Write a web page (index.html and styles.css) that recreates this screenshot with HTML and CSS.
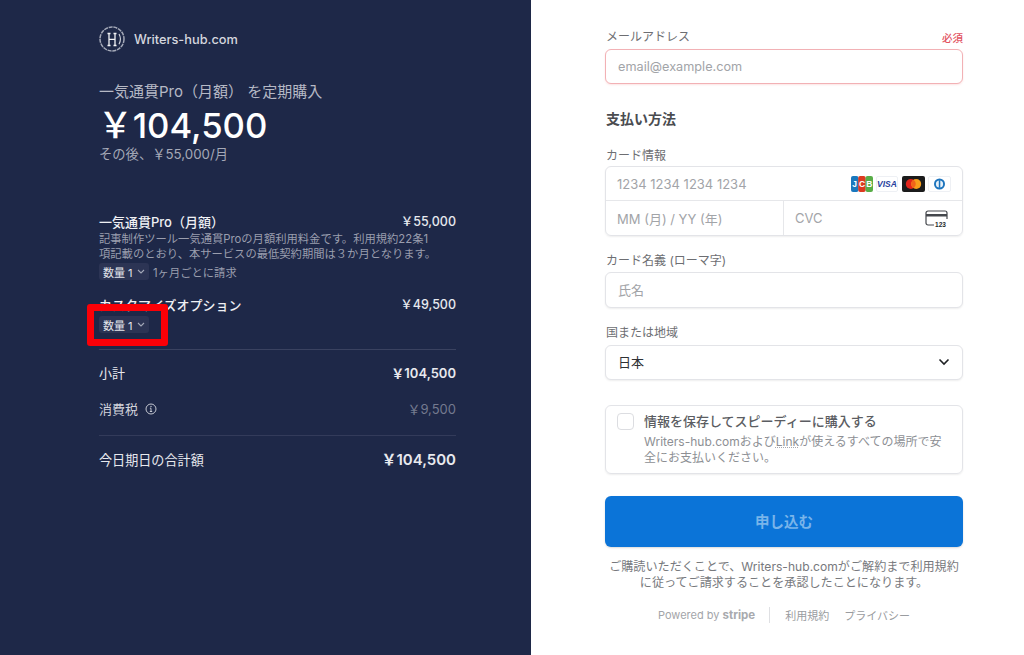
FILE: index.html
```html
<!DOCTYPE html>
<html lang="ja">
<head>
<meta charset="utf-8">
<title>Writers-hub.com</title>
<link rel="stylesheet" href="styles.css">
</head>
<body>
<div class="page">
  <aside class="summary">
    <div class="brand">
      <svg class="logo" viewBox="0 0 26 26" width="26" height="26">
        <circle cx="13" cy="13" r="12" fill="none" stroke="#a4a9b8" stroke-width="1.500" stroke-dasharray="4 0.8"/>
        <path d="M10 7.500v12M16 7.500v12M10 13.300h6M8.500 7.500h3M8.500 19.500h3M14.500 7.500h3M14.500 19.500h3" fill="none" stroke="#f2f3f6" stroke-width="1.300"/>
        <path d="M20 8c1.800 3.200 1.800 7 0 10.200" fill="none" stroke="#d5d8e0" stroke-width="1.100"/>
      </svg>
      <span class="brand-name">Writers-hub.com</span>
    </div>
    <div class="plan">一気通貫Pro（月額） を定期購入</div>
    <div class="price">￥104,500</div>
    <div class="then">その後、￥55,000/月</div>

    <div class="item first">
      <div class="row"><span class="item-name">一気通貫Pro（月額）</span><span class="item-price">￥55,000</span></div>
      <p class="desc">記事制作ツール一気通貫Proの月額利用料金です。利用規約22条1<br>項記載のとおり、本サービスの最低契約期間は３か月となります。</p>
      <div class="qty-row">
        <span class="qty">数量 1<svg class="qty-chev" viewBox="0 0 8 5" width="8" height="5"><path d="M1 1l3 3 3-3" fill="none" stroke="#a3a8b8" stroke-width="1.100"/></svg></span>
        <span class="cycle">1ヶ月ごとに請求</span>
      </div>
    </div>
    <div class="item second">
      <div class="row"><span class="item-name">カスタマイズオプション</span><span class="item-price">￥49,500</span></div>
      <div class="qty-row tight">
        <span class="qty">数量 1<svg class="qty-chev" viewBox="0 0 8 5" width="8" height="5"><path d="M1 1l3 3 3-3" fill="none" stroke="#a3a8b8" stroke-width="1.100"/></svg></span>
      </div>
      <div class="highlight"></div>
    </div>

    <div class="totals">
      <div class="row subtotal"><span>小計</span><strong>￥104,500</strong></div>
      <div class="row tax">
        <span class="tax-label">消費税
          <svg class="info" viewBox="0 0 12 12" width="12" height="12"><circle cx="6" cy="6" r="5" fill="none" stroke="#c5c8d2" stroke-width="1"/><path d="M6 5.300v3M4.800 8.500h2.400M4.900 5.200h1.100" fill="none" stroke="#c5c8d2" stroke-width="1"/><circle cx="6" cy="3.500" r=".7" fill="#c5c8d2"/></svg>
        </span>
        <span class="tax-value">￥9,500</span>
      </div>
    </div>
    <div class="row grand"><span>今日期日の合計額</span><strong>￥104,500</strong></div>
  </aside>

  <main class="form">
    <div class="label-row"><label class="label">メールアドレス</label><span class="required">必須</span></div>
    <div class="field email"><span class="ph email-ph">email@example.com</span></div>

    <h2 class="section">支払い方法</h2>

    <div class="label">カード情報</div>
    <div class="card-group">
      <div class="card-top">
        <span class="ph">1234 1234 1234 1234</span>
        <span class="brands">
          <svg viewBox="0 0 22 16" width="22" height="16">
            <rect x="0" y="0" width="7.500" height="16" rx="2" fill="#1a78bd"/><rect x="7.200" y="0" width="7.500" height="16" rx="2" fill="#dc3a20"/><rect x="14.500" y="0" width="7.500" height="16" rx="2" fill="#58ad47"/>
            <text x="3.700" y="11" class="jcb">J</text><text x="11" y="11" class="jcb">C</text><text x="18.300" y="11" class="jcb">B</text>
          </svg>
          <svg viewBox="0 0 22 16" width="22" height="16">
            <rect x=".5" y=".5" width="21" height="15" rx="1.500" fill="#fff" stroke="#eef0f4"/>
            <text x="11" y="11" class="visa">VISA</text>
          </svg>
          <svg viewBox="0 0 23 16" width="23" height="16">
            <rect width="23" height="16" rx="2" fill="#1b1b1b"/><circle cx="8.800" cy="8" r="5" fill="#e2231a"/><circle cx="14.200" cy="8" r="5" fill="#f79e1b"/><path d="M11.500 3.800a5 5 0 0 1 0 8.400a5 5 0 0 1 0-8.400z" fill="#f0641a"/>
          </svg>
          <svg viewBox="0 0 23 16" width="23" height="16">
            <rect x=".5" y=".5" width="22" height="15" rx="1.500" fill="#fff" stroke="#eef0f4"/>
            <circle cx="11.500" cy="8" r="5.500" fill="#1c74bd"/><circle cx="11.500" cy="8" r="3.600" fill="#e8f2fa"/><rect x="10.800" y="4.200" width="1.500" height="7.600" fill="#1c74bd"/>
          </svg>
        </span>
      </div>
      <div class="card-bottom">
        <div class="expiry"><span class="ph">MM (月) / YY (年)</span></div>
        <div class="cvc">
          <span class="ph">CVC</span>
          <svg viewBox="0 0 23 17" width="23" height="17">
            <path d="M9 15H3a2 2 0 0 1-2-2V3a2 2 0 0 1 2-2h17a2 2 0 0 1 2 2v6" fill="none" stroke="#44474c" stroke-width="1.200"/>
            <rect x="1" y="4" width="21" height="2.500" fill="#44474c"/>
            <text x="15.500" y="16.500" class="cvc-num">123</text>
          </svg>
        </div>
      </div>
    </div>

    <div class="label name-label">カード名義 (ローマ字)</div>
    <div class="field plain name-field"><span class="ph">氏名</span></div>

    <div class="label country-label">国または地域</div>
    <div class="field plain select">
      <span class="value">日本</span>
      <svg viewBox="0 0 12 8" width="12" height="8"><path d="M1.500 1.500L6 6l4.500-4.500" fill="none" stroke="#1f2124" stroke-width="1.600"/></svg>
    </div>

    <div class="save">
      <span class="checkbox"></span>
      <div class="save-text">
        <div class="save-title">情報を保存してスピーディーに購入する</div>
        <div class="save-desc">Writers-hub.comおよび<span class="link">Link</span>が使えるすべての場所で安全にお支払いください。</div>
      </div>
    </div>

    <button class="submit" type="button">申し込む</button>

    <p class="terms">ご購読いただくことで、Writers-hub.comがご解約まで利用規約<br>に従ってご請求することを承認したことになります。</p>

    <div class="footer">
      <span class="powered">Powered by <b>stripe</b></span>
      <span class="sep"></span>
      <span class="foot-link">利用規約</span>
      <span class="foot-link">プライバシー</span>
    </div>
  </main>
</div>
</body>
</html>
```
FILE: styles.css
```css
* { box-sizing: border-box; }
html, body { margin: 0; height: 100%; }
body {
  font-family: "Inter", "Noto Sans CJK JP", sans-serif;
  background: #fff;
  overflow: hidden;
}
.page { display: flex; width: 1024px; height: 655px; }

.summary {
  width: 531px;
  height: 655px;
  flex: none;
  background: #1e2848;
  color: #fff;
  padding: 26px 75px 0 99px;
}
.brand { display: flex; align-items: center; gap: 9px; height: 26px; }
.logo { flex: none; }
.brand-name { font-size: 12.800px; color: #d5d7df; font-weight: 500; }
.plan { margin-top: 31px; font-size: 15px; line-height: 18px; color: #b6b9c5; white-space: nowrap; }
.price { margin: 4px 0 0 -1px; font-size: 34.700px; line-height: 40px; font-weight: 500; }
.then { margin-top: 1px; font-size: 13.300px; line-height: 16px; color: #a5a9b7; }

.row { display: flex; justify-content: space-between; align-items: center; }
.item.first { margin-top: 51px; }
.item.second { margin-top: 16px; position: relative; }
.item-name { font-size: 13px; line-height: 18px; font-weight: 500; color: #eff0f4; }
.item-price { font-size: 12.500px; line-height: 18px; font-weight: 500; color: #e6e8ee; }
.desc { margin: 1px 0 0; font-size: 11.300px; line-height: 14.500px; color: #9a9eae; white-space: nowrap; }
.qty-row { display: flex; align-items: center; gap: 4px; margin-top: 2px; }
.qty-row.tight { margin-top: 2px; }
.qty {
  display: inline-flex; align-items: center; gap: 4px;
  height: 17px; width: 50px; padding: 0 4px;
  background: #2c3454; border-radius: 3px;
  font-size: 11px; color: #e4e6ec; white-space: nowrap;
}
.qty-chev { flex: none; }
.cycle { font-size: 11.300px; color: #9a9eae; }
.highlight {
  position: absolute; left: -12px; top: 8px; width: 81px; height: 42px;
  border: 7px solid #fb0007; border-radius: 3px;
}

.totals { margin-top: 16px; border-top: 1px solid #3a4260; padding-top: 14px; }
.subtotal { font-size: 13px; line-height: 18px; color: #e8e9ee; }
.subtotal strong { font-weight: 600; }
.tax { margin-top: 18px; font-size: 13px; line-height: 18px; }
.tax-label { display: inline-flex; align-items: center; gap: 7px; color: #d2d4dc; }
.tax-value { color: #747a8f; }
.grand {
  margin-top: 17px; border-top: 1px solid #333b5a; padding-top: 15px;
  font-size: 13.100px; line-height: 18px; color: #e8e9ee;
}
.grand strong { font-size: 15px; font-weight: 600; }

.form { width: 358px; margin-left: 74px; padding-top: 28px; color: #4f5257; }
.label-row { display: flex; justify-content: space-between; align-items: center; }
.label { display: block; padding-left: 1px; font-size: 12px; line-height: 18px; color: #6d6e72; }
.required { font-size: 10.500px; color: #e2525f; font-weight: 500; }
.field {
  display: flex; align-items: center; height: 35px; padding: 0 12px 2px;
  border-radius: 6px; background: #fff; font-size: 13px;
}
.email { margin-top: 3px; padding-bottom: 0; border: 1px solid #f2b1b5; box-shadow: 0 1px 2px rgba(240,120,120,.2); }
.plain { border: 1px solid #e3e4e8; box-shadow: 0 1px 2px rgba(0,0,0,.07); }
.ph { font-size: 13px; color: #a2a4a8; }
.email-ph { font-size: 12.700px; }
.section { margin: 25px 0 0; padding-left: 1px; font-size: 14px; line-height: 20px; font-weight: 600; color: #4a4c50; }
.section + .label { margin-top: 18px; }
.card-group {
  margin-top: 1px; border: 1px solid #e3e4e8; border-radius: 6px;
  box-shadow: 0 1px 2px rgba(0,0,0,.07); height: 70px;
}
.card-top {
  display: flex; align-items: center; justify-content: space-between;
  height: 34px; padding: 0 11px; border-bottom: 1px solid #e6e7ea;
}
.brands { display: flex; gap: 3.500px; }
.jcb { font: 700 8.500px "Liberation Sans", sans-serif; fill: #fff; text-anchor: middle; }
.visa { font: italic 700 8.500px "Liberation Sans", sans-serif; fill: #2a3f9d; text-anchor: middle; }
.card-bottom { display: flex; height: 34px; }
.expiry { width: 178px; padding-left: 11px; border-right: 1px solid #e6e7ea; display: flex; align-items: center; }
.cvc { flex: 1; display: flex; align-items: center; justify-content: space-between; padding: 0 14px 0 11px; }
.cvc-num { font: 700 6.500px "Liberation Sans", sans-serif; fill: #26282c; text-anchor: middle; paint-order: stroke; stroke: #fff; stroke-width: 2px; }
.name-label { margin-top: 16px; }
.name-field { margin-top: 2px; height: 36px; }
.country-label { margin-top: 16px; }
.country-label + .field { margin-top: 3px; }
.select { justify-content: space-between; padding-right: 12px; }
.value { font-size: 13px; color: #2f3134; }
.save {
  display: flex; gap: 10px; margin-top: 25px; height: 69px;
  padding: 7px 12px 0 11px; border: 1px solid #e3e4e8; border-radius: 6px;
  box-shadow: 0 1px 2px rgba(0,0,0,.07);
}
.checkbox { flex: none; width: 17px; height: 17px; border: 1px solid #dcdde1; border-radius: 4px; }
.save-title { font-size: 13px; line-height: 17px; font-weight: 500; color: #5b5d62; }
.save-desc { margin-top: 4px; font-size: 12px; line-height: 16px; color: #8d8f94; }
.link { text-decoration: underline dotted #a7a9ae; }
.submit {
  display: block; width: 100%; height: 51px; margin-top: 22px; padding-bottom: 3px;
  border: 0; border-radius: 6px; background: #0b74d8;
  color: #79b4ea; font: 600 14.500px "Inter", "Noto Sans CJK JP", sans-serif;
  box-shadow: 0 1px 2px rgba(0,0,0,.15);
}
.terms { margin: 12px 0 0; text-align: center; font-size: 12.100px; line-height: 16px; color: #77797d; white-space: nowrap; }
.footer { display: flex; align-items: center; justify-content: center; margin-top: 16px; font-size: 11px; color: #a3a5a9; height: 16px; }
.powered b { font-weight: 700; font-size: 11.500px; color: #a8aaae; }
.sep { width: 1px; height: 16px; background: #dfe0e3; margin: 0 15px 0 14px; }
.foot-link { margin-right: 15px; color: #9a9ca0; }
.foot-link:last-child { margin-right: 0; }
```
